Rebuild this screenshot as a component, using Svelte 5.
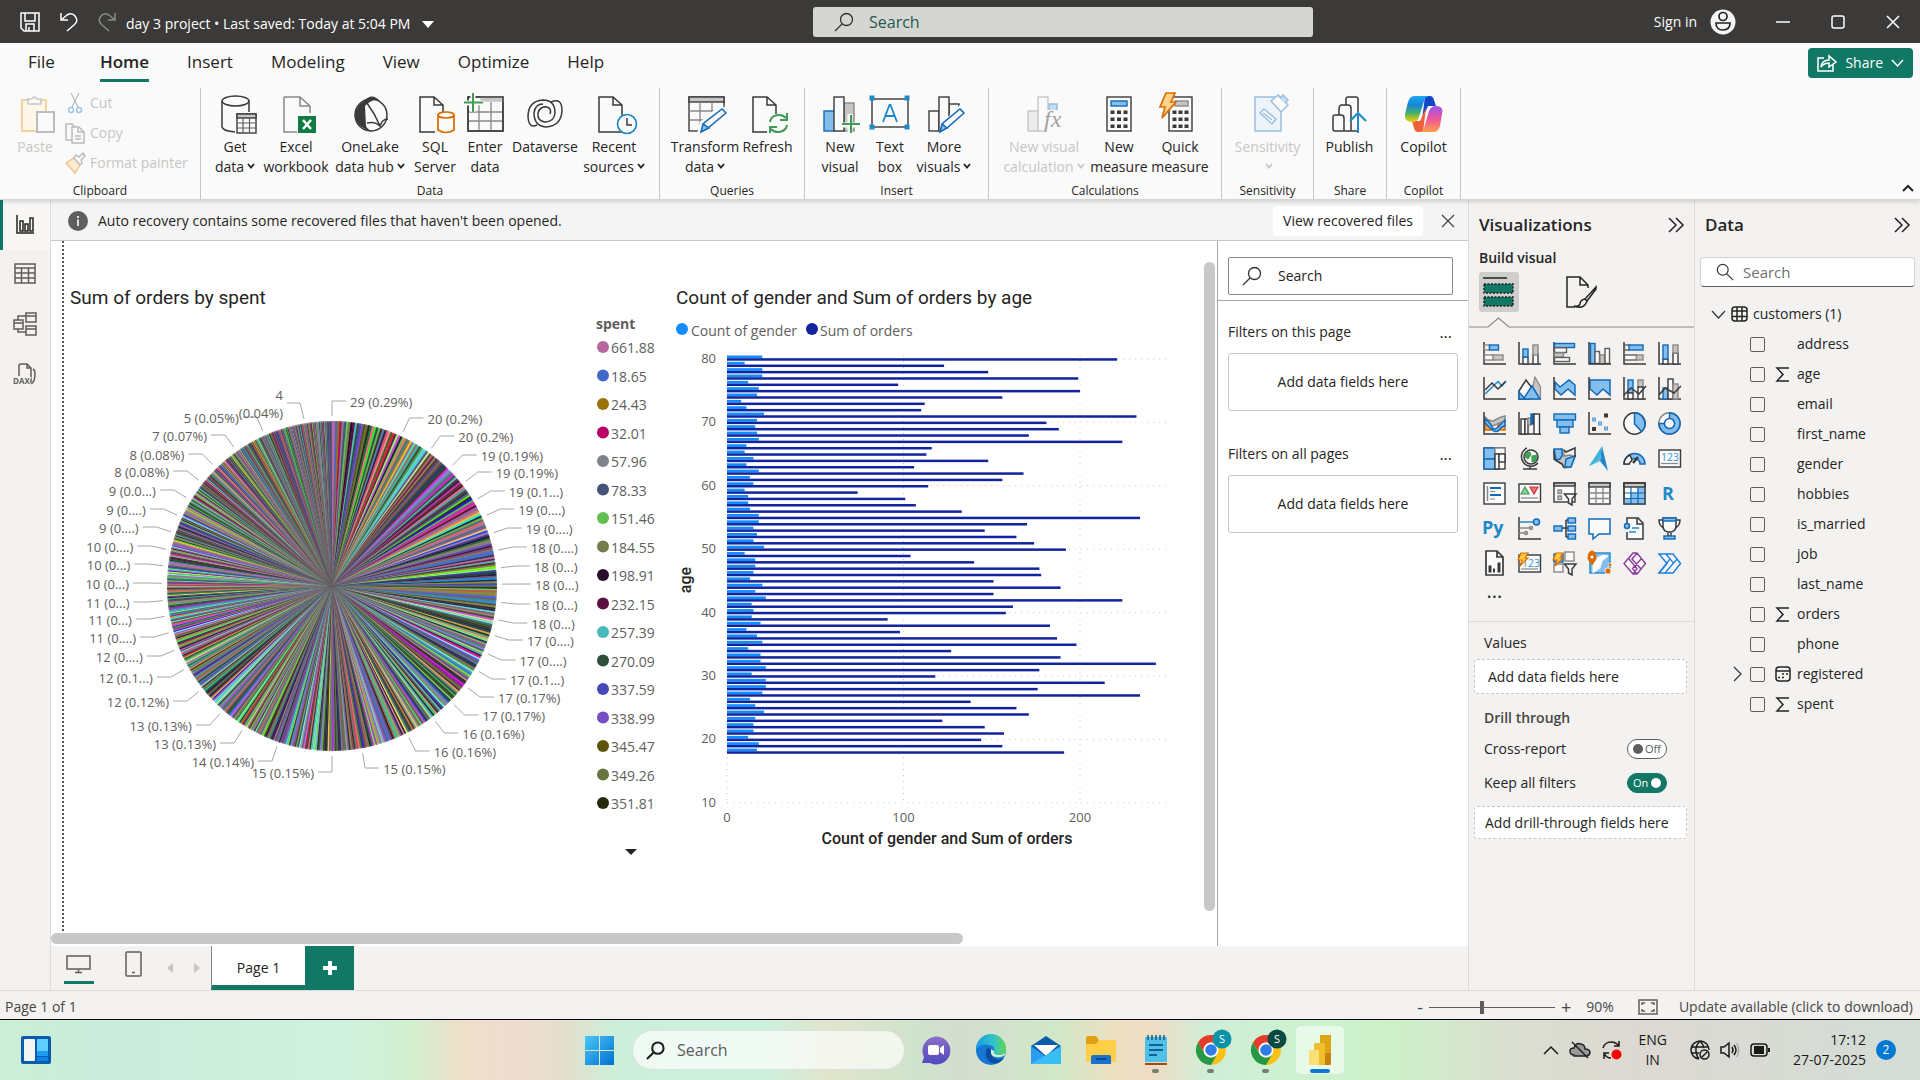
<script>
  const D = '#3b3a39', B = '#1169b8', LB = '#83beec', G = '#c8c6c4', GS = '#8a8886', W = '#fafafa', GR = '#3f9b55';

  const r = (x, y, w, h, fill = W, stroke = D, sw = 1.4) =>
    `<rect x="${x}" y="${y}" width="${w}" height="${h}" fill="${fill}" stroke="${stroke}" stroke-width="${sw}"/>`;
  const p = (d, stroke = D, fill = 'none', sw = 1.5) =>
    `<path d="${d}" fill="${fill}" stroke="${stroke}" stroke-width="${sw}"/>`;
  const c = (x, y, rad, fill = W, stroke = D, sw = 1.5) =>
    `<circle cx="${x}" cy="${y}" r="${rad}" fill="${fill}" stroke="${stroke}" stroke-width="${sw}"/>`;
  const axes = p('M1 0V22H23');
  const bolt = p('M3 1H10L7 6H10L2 14L4 8H0Z', '#d86c00', '#ffc83d', 1.2);
  const funnel = p('M11.5 12H23L19 17V23L15.5 21V17Z', D, W, 1.5);

  // Visual gallery, drawn on a 23 x 23 grid
  const visuals = [
    ['Stacked bar chart', axes + r(1.5, 3, 5, 5, W, GS) + r(6.5, 3, 9, 5, LB, B) + r(1.5, 13, 9, 5, W, GS) + r(10, 13, 10, 5, G, GS)],
    ['Stacked column chart', axes + r(5, 15, 5, 7) + r(5, 7, 5, 8, LB, B) + r(15, 12, 5, 10) + r(15, 3, 5, 10, G, GS)],
    ['Clustered bar chart', axes + r(1.5, 1.5, 20, 4, LB, B) + r(1.5, 5.8, 12, 4.7, W, '#605e5c') + r(1.5, 11, 9, 4, G, GS) + r(1.5, 15.5, 15, 4, W, '#605e5c')],
    ['Clustered column chart', r(2.5, 1.5, 4.5, 20, LB, B) + r(7, 9.5, 4.5, 12, W, '#605e5c') + r(12, 13, 4.5, 9, G, GS) + r(17, 6.5, 4.5, 15, W, '#605e5c') + axes],
    ['100% stacked bar chart', axes + r(1.5, 3, 5, 5, W, '#605e5c') + r(6, 3, 14, 5, LB, B) + r(1.5, 13, 12, 5, W, '#605e5c') + r(13.5, 13, 6.5, 5, G, GS)],
    ['100% stacked column chart', axes + r(5, 17, 5, 5) + r(5, 3, 5, 14, LB, B) + r(15, 11, 5, 11) + r(15, 3, 5, 8, G, GS)],
    ['Line chart', axes + p('M2 17L15 4.500L19 9L23 4', '#1e88c9') + p('M2 13L9 6L15 12L22.500 4.500')],
    ['Area chart', p('M17 0L22.500 10V22H12Z', GS, G, 1.2) + p('M1 14L8 3L17 15L12 22H1Z', D, W) + p('M1 15L6 21L14 9L22 22H1Z', B, LB)],
    ['Stacked area chart', p('M2 5L7 10L16 3L22 8V18L15 12L8 18L2 12Z', B, LB) + axes],
    ['100% stacked area chart', p('M2 3H22V18L15 12L9 18L2 12Z', B, LB) + axes],
    ['Line and stacked column chart', axes + r(5, 3, 5, 13, LB, B) + r(5, 16, 5, 6) + r(15, 3, 5, 7, G, GS) + r(15, 10, 5, 12) + p('M1 18L8 11L16 17L23 9')],
    ['Line and clustered column chart', axes + r(5, 11, 5, 11, LB, B) + r(10, 2, 5, 20) + r(15, 7, 5, 15, G, GS) + p('M1 18L7 11L16 16L23 9')],
    ['Ribbon chart', p('M2 5Q7 11 12 8T22 4V10Q17 10 12 13T2 9Z', GS, G) + p('M2 13H8V18H2ZM15 13H22V18H15Z', '#d86c00', '#f7a64a') + p('M2 7Q7 10 9 15T17 13T22 9V14Q19 14 16 18T7 16T2 11Z', B, LB) + axes],
    ['Waterfall chart', axes + r(3, 7, 4, 15) + r(7, 7, 3, 15) + r(10, 6, 3, 7, G, GS) + r(13, 2, 3, 10, B, B) + r(16, 2, 5.5, 20)],
    ['Funnel', r(1, 2, 21.500, 6, LB, B) + r(4, 8, 16, 7, LB, B) + r(7, 15, 9, 6, LB, B)],
    ['Scatter chart', axes + r(4.500, 15.500, 3, 3, D, D, 1) + r(16.500, 2, 3, 3, D, D, 1) + r(4.500, 6, 3, 3, LB, '#5aa2dc', 1) + r(10.500, 10, 3, 3, LB, '#5aa2dc', 1) + r(16.500, 15, 3, 3, LB, '#5aa2dc', 1)],
    ['Pie chart', c(11.500, 11.500, 10.700) + p('M11.500 1A10.700 10.700 0 0 1 18.500 19.500L11.500 12Z', B, LB)],
    ['Donut chart', c(11.500, 11.500, 10.700, W, GS) + p('M11.500 1A10.500 10.500 0 1 1 1 11.500H6.500A5 5 0 1 0 11.500 6.500Z', B, LB) + c(11.500, 11.500, 5, W, B)],
    ['Treemap', r(1, 1, 21, 21) + r(1, 1, 11, 11, LB, B) + r(1, 12, 11, 10, LB, B) + r(12, 1, 10, 6, W, GS) + r(12, 7, 4, 15) + r(16, 7, 6, 8)],
    ['Map', c(13, 10, 7, W) + p('M8 6L12 5L13 8L10 12L7 10ZM14 9L19 8L18 14L14 15Z', GR, '#36a853', 1) + p('M9 1A9.500 9.500 0 1 0 20 16M12 19V22M5 22H19')],
    ['Filled map', p('M1 3H11V9L17 8L22 10L18 20L12 21L9 17L2 13Z', GS, G) + p('M1 2H9V9L7 12L3 13Z', B, LB) + p('M13 12L22 9L18 20H12Z', B, LB) + p('M11 3L13 5L22 1V10M1 3V12L9 17L11 21', D)],
    ['Azure map', `<path d="M14 -1L1 19L12 14Z" fill="#3eb3da"/><path d="M14 -1L12 14L20 24Z" fill="#1d87c9"/><path d="M1 19L14 9L12 14Z" fill="#56bde0"/>`],
    ['Gauge', p('M1 17A10.500 10.500 0 0 1 22 17H17A5.500 5.500 0 0 0 6 17Z', B, LB) + p('M1 17A10.500 10.500 0 0 1 7 8L9 13L6 17Z', D, W) + p('M10 16L15 10', D, 'none', 2.500)],
    ['Card', r(1, 3, 21.500, 17) + `<text x="3" y="14" font-family="Open Sans, sans-serif" font-size="10.500" fill="#3a96d6">123</text>` + p('M3 16.500H20', GS, 'none', 1.200)],
    ['Multi-row card', r(1, 1, 21, 21) + p('M4.500 4V19', GS) + p('M7 6H18M7 13H18', B, 'none', 2) + p('M7 9.500H12M7 17H12', GS, 'none', 1.200)],
    ['KPI', r(1, 2, 21.500, 18) + p('M3 12L7 5L11 12Z', GR, '#8fd19b', 1.200) + p('M12 5H20L16 12Z', '#d13438', '#f1707b', 1.200) + p('M3 16H20', GS, 'none', 1.200)],
    ['Slicer', r(1, 1, 21, 19) + r(1, 1, 21, 3, G) + r(5, 8, 3.500, 3.500, G, GS) + r(5, 14, 3.500, 3.500, G, GS) + funnel],
    ['Table', r(1, 1, 21, 21) + r(1, 1, 21, 4, G) + p('M8 5V22M15 5V22M1 11H22M1 16.500H22', GS, 'none', 1.300)],
    ['Matrix', r(1, 1, 21, 21) + r(8, 11, 14, 11, LB, LB) + r(15, 5, 7, 17, LB, LB) + r(1, 17, 21, 5, LB, LB) + r(1, 1, 21, 4, G) + p('M8 5V22M15 5V22M1 11H22M1 16.500H22', B, 'none', 1.200) + r(1, 1, 21, 21, 'none')],
    ['R script visual', `<text x="4" y="18" font-family="Open Sans, sans-serif" font-weight="700" font-size="18" fill="#1e88c9">R</text>`],
    ['Python visual', `<text x="-1" y="17" font-family="Open Sans, sans-serif" font-weight="700" font-size="18" fill="#1e88c9">Py</text>`],
    ['Key influencers', axes + p('M1 5H16', '#1e88c9') + c(18.500, 5, 3, LB, B) + p('M1 11H12M1 16H7', GS) + c(13, 11, 1.500, G, GS) + c(8, 16, 1.500, G, GS)],
    ['Decomposition tree', p('M9 11H16M13 3V20M13 3H16M13 20H16') + r(1, 9, 8, 5, LB, B) + r(15, 1, 7.500, 5, LB, B) + r(15, 9, 7.500, 5, LB, B) + r(15, 17, 7.500, 5, LB, B)],
    ['Q&A', p('M1 2H22V17H11L5 22V17H1Z', B, W)],
    ['Smart narrative', p('M4 8V1H15L20 6V22H4V15M14 1V7H20', D, W) + c(4, 9, 2.500, LB, B) + p('M9 11H16M6 15H13', '#1e88c9')],
    ['Metrics', p('M5 1H18V9Q18 15 11.500 15T5 9ZM5 3H1Q1 9 6 11M18 3H22Q22 9 17 11M10 15V19H13V15', D, W) + r(5, 1, 13, 3, LB, B) + r(6, 19, 11, 3, LB, B)],
    ['Paginated report', p('M3 -1H14L20 5V23H3ZM14 -1V5H20', D, W, 1.700) + r(6, 14, 2, 6, D, D, 1) + r(10.500, 17, 1, 3, D, D, 1) + r(15, 11, 2, 9, D, D, 1)],
    ['Card (new)', r(1, 3, 21.500, 17) + `<text x="4" y="15" font-family="Open Sans, sans-serif" font-size="10.500" fill="#3a96d6">123</text>` + p('M3 17H20', GS, 'none', 1.200) + bolt],
    ['Slicer (new)', r(1, 12, 9, 8, W, GS) + r(12, 0, 9, 9, W, GS) + r(1, 2, 9, 8, LB, B) + bolt + funnel],
    ['ArcGIS map', r(2, 1, 20, 20, LB, '#1e88c9') + p('M20 4L14 9L12 16L5 21V8L15 3Z', W, W, 1) + p('M4 13L0 7Q0 -1 4 -1T8 7Z', '#d86c00', '#d86c00', 1) + c(4, 5, 1.500, W, W, 0) + c(20, 19, 3.200, '#d86c00', W, 1) + c(22, 13, 1.800, '#d86c00', W, .6)],
    ['Power Apps', p('M1 11.500L10 1H14L22.500 11.500L14 22H10ZM10 1L5.500 6.500L14 16.500L10 22M14 1L9 7L18 17M14 22L9.500 16.500L18.500 6.500', '#8c3a9b', W, 1.400)],
    ['Power Automate', p('M1 2H15L22.500 11.500L15 21H1L9 11.500Z', '#1e80e0', W, 1.500) + p('M8 2L15.500 11L7 21M12 7L1 21M19 7L7 21', '#1e80e0', 'none', 1.300)]
  ];

  const page = (s = D) => p('M5 3H19L28 11V38H5ZM19 3V11H28', s, W, 1.5);
  const pencil = p('M14 36L16 29L34 15L38 19L20 34Z', B, W) + p('M14 38L16 30L21 34Z', B, LB);

  // Ribbon icons, drawn on a 40 x 40 grid centred over each label
  const I = {
    paste: r(7, 6, 24, 31, '#fdf6e9', '#f3d3a0', 2) + p('M13 10V5H17Q19 1 22 5H26V10Z', '#c8c8c8', W) + r(22, 18, 17, 20, W, '#bdbdbd', 2),
    get: p('M7 7V33Q8 37 20 38M34 7V18', D) + `<ellipse cx="20.500" cy="7" rx="13.500" ry="5" fill="${W}" stroke="${D}" stroke-width="1.500"/>` + r(22, 20, 19, 19) + r(22, 20, 19, 4, G) + p('M28 24V39M34.500 24V39M22 29H41M22 34H41', '#605e5c', 'none', 1.2),
    excel: p('M8 3H24L34 12V19M24 3V12H34M8 3V38H21', '#8a8886', W) + `<rect x="22" y="22" width="18" height="17" fill="#107c41"/><path d="M27 26L35 35M35 26L27 35" stroke="#fff" stroke-width="2.500"/>`,
    onelake: c(21, 21, 16, W) + `<path d="M14 7Q22 -2 30 7Q22 4 15 12L16 32Q17 35 23 38Q5 33 5 21Q6 12 14 7Z" fill="${D}"/>` + p('M17 9Q25 20 30 32Q32 25 38 25M30 32Q25 27 17 29'),
    sql: page() + `<rect x="20" y="18" width="21" height="22" fill="${W}"/>` + p('M23 21V36Q31 41 39 36V21', '#d86c00', W, 1.7) + `<ellipse cx="31" cy="21" rx="8" ry="3" fill="${W}" stroke="#d86c00" stroke-width="1.700"/>`,
    enter: r(3, 3, 35, 34) + r(16, 3, 22, 4, G, G) + p('M14 8V37M26 8V37M3 18H38M3 27H38', '#8a8886', 'none', 1.3) + r(3, 3, 35, 34, 'none') + p('M8 0V18M0 9H18', W, 'none', 5) + p('M8 -1V18M-1 8.500H18', GR, 'none', 2),
    dataverse: p('M12 31Q4 35 3 23Q3 7 18 6Q30 6 30 19Q29 28 20 28Q12 27 13 19Q15 12 22 13Q27 15 25 20M26 8Q37 3 37 17Q36 32 21 33Q9 32 9 19Q10 10 18 10'),
    recent: page() + c(33, 30, 9.500, W, '#1e88c9', 1.7) + p('M33 24V31H38'),
    transform: r(4, 3, 35, 34) + r(4, 3, 35, 5, G) + p('M15 8V37M27 8V37M4 17H39M4 26H39', '#8a8886', 'none', 1.3) + `<path d="M12 40L15 28L35 11L43 15V40Z" fill="${W}"/>` + p('M17 36L19 29L37 15L41 19L23 34Z', B, W) + p('M16 38L18 30L24 34Z', B, LB),
    refresh: page() + `<rect x="19" y="20" width="23" height="20" fill="${W}"/>` + p('M22 28A9 8 0 0 1 38 24M39 31A9 8 0 0 1 23 35M39 19V26H32M22 39V33H29', GR, 'none', 2),
    newvisual: r(4, 17, 11, 20, LB, B) + r(24, 9, 10, 28, G, GS) + r(14, 3, 10, 34) + p('M30 20V40M20 31H40', W, 'none', 5) + p('M31 21V39M22 30H40', GR, 'none', 2),
    textbox: r(2, 5, 36, 28) + [[0, 2], [35, 2], [0, 31], [35, 31]].map(([x, y]) => r(x, y, 4, 4, '#1e88c9', '#1e88c9', 1)).join('') + p('M13 28L19.500 11H20.500L27 28M15.500 22H24.500', '#1e88c9', 'none', 1.8),
    more: `<g transform="translate(4 0)">` + r(1, 17, 10, 20) + r(21, 10, 10, 27) + r(11, 3, 10, 34) + `<path d="M11 40L13 30L32 11L40 15V40Z" fill="${W}"/>` + p('M13 36L15 29L32 15L36 19L19 34Z', B, W) + p('M12 38L14 30L19 34Z', B, LB) + `</g>`,
    newcalc: `<g opacity=".45">` + r(4, 17, 11, 20, '#dedddc', GS) + r(25, 10, 8, 12, LB, B) + r(14, 3, 10, 34, W, GS) + `</g><rect x="20" y="16" width="20" height="24" fill="${W}"/><text x="20" y="33" font-family="Liberation Serif, serif" font-style="italic" font-size="24" fill="#a3a2a0">fx</text>`,
    newmeasure: r(8, 3, 24, 34) + r(12, 7, 16, 5, LB, B) + [0, 1, 2].map((i) => [0, 1, 2].map((j) => r(12 + i * 6.5, 17 + j * 7, 3, 2.500, D, D, 1)).join('')).join(''),
    quick: r(9, 3, 23, 34) + r(15, 7, 13, 5, G, GS) + [0, 1, 2].map((i) => [0, 1, 2].map((j) => r(13 + i * 6, 17 + j * 7, 3, 2.500, D, D, 1)).join('')).join('') + p('M6 -1H15L11 8H16L2 24L5 13H0Z', '#d86c00', '#fdd28a', 1.7),
    sensitivity: `<g opacity=".4">` + p('M7 3H33V37H7Z', B, '#d9ecfa') + p('M12 19L16 15L28 25L24 30Z', B, W) + p('M15 19L24 26', B) + p('M23 7L30 1L40 11L33 18Z', B, W) + p('M30 1L33 4L35 1L40 6L37 9', B, LB) + `</g>`,
    publish: p('M3 23Q3 21 5 21H11Q14 21 14 24V37H5Q3 37 3 35ZM9 21V15Q9 11 12 11H18Q21 11 21 14V37H14M16 11V5Q16 3 18 3H26Q28 3 28 5V18M21 22V37H28') + p('M28 39V19M20 27L28 19L36 27', '#1e88c9', 'none', 2)
  };

  const groups = [
    { name: 'Data', pad: 11, end: 15, items: [
      ['get', 46, 'Get', 'data', 1], ['excel', 76, 'Excel', 'workbook'], ['onelake', 72, 'OneLake', 'data hub', 1], ['sql', 58, 'SQL', 'Server'],
      ['enter', 42, 'Enter', 'data'], ['dataverse', 78, 'Dataverse', ''], ['recent', 60, 'Recent', 'sources', 1]] },
    { name: 'Queries', pad: 12, end: 7, items: [['transform', 66, 'Transform', 'data', 1], ['refresh', 59, 'Refresh', '']] },
    { name: 'Insert', pad: 10, end: 15, items: [['newvisual', 50, 'New', 'visual'], ['textbox', 50, 'Text', 'box'], ['more', 58, 'More', 'visuals', 1]] },
    { name: 'Calculations', pad: 11, end: 11, items: [['newcalc', 88, 'New visual', 'calculation', 1, 1], ['newmeasure', 62, 'New', 'measure'], ['quick', 60, 'Quick', 'measure']] },
    { name: 'Sensitivity', pad: 10, end: 10, items: [['sensitivity', 71, 'Sensitivity', '', 1, 1]] },
    { name: 'Share', pad: 5, end: 6, items: [['publish', 61, 'Publish', '']] },
    { name: 'Copilot', pad: 6, end: 6, items: [['copilot', 61, 'Copilot', '']] }
  ];

  const tabs = ['File', 'Home', 'Insert', 'Modeling', 'View', 'Optimize', 'Help'];

  // Pie chart
  const CX = 268, CY = 345, R = 165, RL = 185;
  const known = ['#b5689f', '#4068c8', '#9a7008', '#b80065', '#7d8388', '#45527a', '#62bf4f', '#747d4e', '#2a0c2b', '#5c0d42', '#49b9bc', '#2e4f3b', '#4648b8', '#744ec2', '#5c540c', '#66753f', '#262b0c'];
  const legend = ['661.88', '18.65', '24.43', '32.01', '57.96', '78.33', '151.46', '184.55', '198.91', '232.15', '257.39', '270.09', '337.59', '338.99', '345.47', '349.26', '351.81'];
  let seed = 41;
  const rand = () => (seed = (seed * 16807) % 2147483647) / 2147483647;
  const tint = () => {
    const tone = rand();
    const h = Math.floor(rand() * 360);
    if (tone < 0.3) return `hsl(${h} ${20 + Math.floor(rand() * 40)}% ${16 + Math.floor(rand() * 14)}%)`;
    if (tone < 0.7) return `hsl(${h} ${15 + Math.floor(rand() * 35)}% ${36 + Math.floor(rand() * 22)}%)`;
    return `hsl(${h} ${60 + Math.floor(rand() * 40)}% ${45 + Math.floor(rand() * 30)}%)`;
  };
  const values = Array.from({ length: 800 }, (_, i) => (i === 0 ? 29 : 20 - 16 * Math.pow(i / 800, 0.9)));
  const total = values.reduce((a, b) => a + b, 0);
  let acc = 0;
  const pt = (a, rad) => `${(CX + rad * Math.sin(a)).toFixed(2)} ${(CY - rad * Math.cos(a)).toFixed(2)}`;
  const slices = values.map((v, i) => {
    const a0 = (acc / total) * Math.PI * 2;
    acc += v;
    const a1 = (acc / total) * Math.PI * 2;
    return { d: `M${CX} ${CY}L${pt(a0, R)}A${R} ${R} 0 0 1 ${pt(a1, R)}Z`, fill: i < known.length ? known[i] : tint() };
  });
  const right = [['29 (0.29%)', 160], ['20 (0.2%)', 177], ['20 (0.2%)', 195], ['19 (0.19%)', 214], ['19 (0.19%)', 231], ['19 (0.1...)', 250], ['19 (0....)', 268], ['19 (0....)', 287], ['18 (0....)', 306], ['18 (0...)', 325], ['18 (0...)', 343], ['18 (0...)', 363], ['18 (0...)', 382], ['17 (0....)', 399], ['17 (0....)', 419], ['17 (0.1...)', 438], ['17 (0.17%)', 456], ['17 (0.17%)', 474], ['16 (0.16%)', 492], ['16 (0.16%)', 510], ['15 (0.15%)', 527]];
  const left = [['15 (0.15%)', 531], ['14 (0.14%)', 520], ['13 (0.13%)', 502], ['13 (0.13%)', 484], ['12 (0.12%)', 460], ['12 (0.1...)', 436], ['12 (0....)', 415], ['11 (0....)', 396], ['11 (0...)', 378], ['11 (0...)', 361], ['10 (0...)', 342], ['10 (0...)', 323], ['10 (0....)', 305], ['9 (0....)', 286], ['9 (0....)', 268], ['9 (0.0...)', 249], ['8 (0.08%)', 230], ['8 (0.08%)', 213], ['7 (0.07%)', 194], ['5 (0.05%)', 176]];
  const label = ([text, y], side) => {
    const dy = Math.max(-1, Math.min(1, (y - CY) / RL));
    const dx = side * Math.sqrt(1 - dy * dy);
    const ex = CX + dx * RL;
    return { text, y, anchor: side > 0 ? 'start' : 'end', tx: ex + side * 18, line: `M${CX + dx * 170} ${CY + dy * 170}L${ex} ${y}h${side * 14}` };
  };
  const labels = [...right.map((l) => label(l, 1)), ...left.map((l) => label(l, -1))];

  // Bar chart: ages 80 down to 18
  const orders = [221, 123, 148, 199, 97, 200, 156, 112, 110, 232, 181, 188, 171, 224, 116, 113, 148, 106, 168, 156, 114, 74, 101, 107, 133, 234, 170, 146, 164, 174, 192, 104, 140, 177, 178, 151, 189, 151, 224, 162, 158, 91, 183, 98, 187, 198, 127, 189, 243, 177, 118, 214, 176, 234, 138, 164, 171, 122, 146, 157, 144, 156, 191];
  const genders = [20, 10, 20, 20, 12, 18, 17, 8, 11, 21, 17, 16, 17, 18, 11, 10, 15, 11, 18, 13, 15, 10, 12, 12, 13, 18, 18, 15, 17, 15, 21, 10, 16, 16, 15, 13, 20, 16, 22, 14, 15, 14, 19, 11, 17, 20, 12, 19, 19, 22, 14, 22, 22, 20, 13, 16, 21, 16, 15, 15, 12, 18, 17];
  const X0 = 63, UX = 1.765, Y80 = 118, UY = 6.34;
  const ageY = (a) => Y80 + (80 - a) * UY;

  const fields = [['address'], ['age', 's'], ['email'], ['first_name'], ['gender'], ['hobbies'], ['is_married'], ['job'], ['last_name'], ['orders', 's'], ['phone'], ['registered', 'd'], ['spent', 's']];

  let activeTab = $state('Home');
</script>

{#snippet chev()}<svg class="chev" viewBox="0 0 8 6" aria-hidden="true"><path d="M1 1L4 4.500L7 1" /></svg>{/snippet}
{#snippet lens(cls)}<svg class="lens {cls}" viewBox="0 0 20 20" aria-hidden="true"><circle cx="12.500" cy="7.500" r="6" /><path d="M8 12L1 19" /></svg>{/snippet}
{#snippet dbl()}<svg class="dbl" viewBox="0 0 16 16" aria-hidden="true"><path d="M1 1L8 8L1 15M8 1L15 8L8 15" /></svg>{/snippet}
{#snippet chrome(initial, cls)}
  <svg width="42" height="42" viewBox="-6 -6 42 42" aria-hidden="true">
    <circle cx="15" cy="15" r="15" fill="#fbc116" />
    <path d="M2 7.500A15 15 0 0 1 28 7.500H15A7.500 7.500 0 0 0 8.500 18.700Z" fill="#e33b2e" />
    <path d="M2 7.500A15 15 0 0 0 15 30L21.500 18.700A7.500 7.500 0 0 1 8.500 18.700Z" fill="#249a49" />
    <circle cx="15" cy="15" r="7.500" fill="#fff" /><circle cx="15" cy="15" r="5.800" fill="#2f7de9" />
    <circle cx="26" cy="4" r="9.500" class={cls} />
    <text x="26" y="8" text-anchor="middle" class="initial">{initial}</text>
  </svg>
{/snippet}

<div class="app">
  <header class="titlebar">
    <div class="tleft">
      <button aria-label="Save"><svg width="20" height="20" viewBox="0 0 20 20"><path class="ln" d="M1 1H19V19H4L1 16ZM5 1V9H15V1M6 19V12H14V19M9 15V19" /></svg></button>
      <button aria-label="Undo"><svg width="18" height="20" viewBox="0 0 18 20"><path class="ln" d="M1 1V8H8M1 8L7 3Q12 0 15 4Q19 9 14 13L7 19" /></svg></button>
      <button aria-label="Redo" class="dim"><svg width="18" height="20" viewBox="0 0 18 20"><path class="ln" d="M17 1V8H10M17 8L11 3Q6 0 3 4Q-1 9 4 13L11 19" /></svg></button>
      <button class="doc">day 3 project • Last saved: Today at 5:04 PM<svg width="12" height="7" viewBox="0 0 12 7"><path d="M0 0H12L6 7Z" fill="#fff" /></svg></button>
    </div>
    <label class="tsearch">{@render lens('big')}<input type="search" placeholder="Search" aria-label="Search" /></label>
    <div class="tright">
      <button class="signin">Sign in
        <svg width="26" height="26" viewBox="0 0 26 26"><circle cx="13" cy="13" r="12.500" fill="#f5f5f5" /><circle cx="13" cy="7.500" r="4" fill="none" stroke="#222" stroke-width="1.700" /><path d="M6 14H20Q20 21 13 21T6 14Z" fill="none" stroke="#222" stroke-width="1.700" /></svg>
      </button>
      <button class="win" aria-label="Minimize"><svg width="14" height="14" viewBox="0 0 14 14"><path class="ln" d="M0 7H14" /></svg></button>
      <button class="win" aria-label="Maximize"><svg width="14" height="14" viewBox="0 0 14 14"><rect class="ln" x="1" y="1" width="12" height="12" rx="2" /></svg></button>
      <button class="win" aria-label="Close"><svg width="14" height="14" viewBox="0 0 14 14"><path class="ln" d="M1 1L13 13M13 1L1 13" /></svg></button>
    </div>
  </header>

  <nav class="tabs">
    {#each tabs as t}
      <button class:file={t === 'File'} class:on={activeTab === t} onclick={() => (activeTab = t)}><span>{t}</span></button>
    {/each}
    <button class="share">
      <svg width="20" height="18" viewBox="0 0 20 18"><path class="ln" d="M7 4H1V17H16V11M4 13Q5 6 12 6V2L19 8L12 13V9Q7 9 4 13Z" /></svg>
      Share
      <svg width="13" height="8" viewBox="0 0 13 8"><path class="ln" d="M1 1L6.500 7L12 1" /></svg>
    </button>
  </nav>

  <section class="ribbon" aria-label="Ribbon">
    <div class="group clipboard">
      <div class="items">
        <button class="rb off" disabled><svg width="40" height="40" viewBox="0 0 40 40">{@html I.paste}</svg><span>Paste</span></button>
        <div class="stack">
          <button disabled><svg width="20" height="22" viewBox="0 0 20 22"><path d="M6 1L13 15M14 1L7 15" stroke="#aaa" /><g fill="none" stroke="#9cc8e6" stroke-width="1.500"><circle cx="6" cy="18" r="2.500" /><circle cx="14" cy="18" r="2.500" /></g></svg>Cut</button>
          <button disabled><svg width="20" height="22" viewBox="0 0 20 22"><g fill="#fafafa" stroke="#bbb" stroke-width="1.500"><path d="M1 2H7L11 6V18H1Z" /><path d="M7 5H14L19 10V21H7ZM13 5V10H19M10 14H16M10 17H16" /></g></svg>Copy</button>
          <button disabled><svg width="20" height="22" viewBox="0 0 20 22"><path d="M1 11L9 6L15 13L10 21Z" fill="#fdebd0" stroke="#efc08a" stroke-width="1.400" /><path d="M9 6L11 3L14 5L18 1L20 4L16 8L17 11L15 13Z" fill="#fafafa" stroke="#bbb" stroke-width="1.400" /></svg>Format painter</button>
        </div>
      </div>
      <h3>Clipboard</h3>
    </div>
    {#each groups as g}
      <div class="group">
        <div class="items" style="padding-left:{g.pad}px;padding-right:{g.end}px">
          {#each g.items as [icon, w, l1, l2, drop, off]}
            <button class="rb" class:off style="width:{w}px" disabled={!!off}>
              {#if icon === 'copilot'}
                <svg width="40" height="40" viewBox="0 0 40 40">
                  <defs>
                    <linearGradient id="cpA" x1="0" y1="0" x2="0" y2="1"><stop offset="0" stop-color="#1fa5f5" /><stop offset=".35" stop-color="#1486d8" /><stop offset=".65" stop-color="#45b06a" /><stop offset="1" stop-color="#f5d000" /></linearGradient>
                    <linearGradient id="cpB" x1="0" y1="0" x2="0" y2="1"><stop offset="0" stop-color="#9a55f0" /><stop offset=".5" stop-color="#ee5598" /><stop offset="1" stop-color="#ffa04a" /></linearGradient>
                  </defs>
                  <path d="M21 2H26Q29 2 30 6L32 12H24L18 26Z" fill="#1447c8" />
                  <path d="M19 38H14Q11 38 10 34L8 27H16L22 14Z" fill="#f0603a" />
                  <path d="M10 2H25Q21 3 20 7L15 23Q14 28 8 28Q0 28 1 20L4 8Q6 2 10 2Z" fill="url(#cpA)" />
                  <path d="M30 38H14Q19 38 20 34L25 17Q27 12 32 12Q40 12 38 20L36 32Q34 38 30 38Z" fill="url(#cpB)" />
                </svg>
              {:else}
                <svg width="40" height="40" viewBox="0 0 40 40">{@html I[icon]}</svg>
              {/if}
              <span>{l1}</span>
              {#if l2 || drop}<span>{l2}{#if drop}{@render chev()}{/if}</span>{/if}
            </button>
          {/each}
        </div>
        <h3>{g.name}</h3>
      </div>
    {/each}
    <button class="collapse" aria-label="Collapse ribbon"><svg width="12" height="8" viewBox="0 0 12 8"><path d="M1 7L6 2L11 7" fill="none" stroke="#222" stroke-width="2" /></svg></button>
  </section>

  <div class="body">
    <nav class="rail">
      <button class="on" aria-label="Report view"><svg width="24" height="24" viewBox="0 0 24 24"><path d="M4 3V21H21" class="k2" /><path d="M7 9H10V19H7ZM12 12H15V19H12ZM17 6H20V19H17Z" class="k2" /></svg></button>
      <button aria-label="Table view"><svg width="24" height="24" viewBox="0 0 24 24"><path d="M2 2H22V21H2ZM2 6H22M2 11H22M2 16H22M8.500 6V21M15.500 6V21" class="g" /></svg></button>
      <button aria-label="Model view"><svg width="24" height="24" viewBox="0 0 24 24"><path d="M1 8H10V17H1ZM1 11H10M13 1H23V10H13ZM13 4H23M13 14H23V23H13ZM13 17H23M5 8V4H13M5 17V20H13" class="g" /></svg></button>
      <button aria-label="DAX query view"><svg width="24" height="24" viewBox="0 0 24 24"><path d="M6 14V4Q6 2 8 2H14L18 6V19Q18 21 15 21M14 2V6H18M20 7Q22 8 22 12Q22 20 18 22" class="g" /><text x="0" y="22" class="dax">DAX</text></svg></button>
    </nav>

    <main class="center">
      <div class="info">
        <svg width="20" height="20" viewBox="0 0 20 20"><circle cx="10" cy="10" r="10" fill="#605e5c" /><path d="M10 8.500V15M10 5V7" stroke="#fff" stroke-width="1.600" /></svg>
        <p>Auto recovery contains some recovered files that haven't been opened.</p>
        <button class="rec">View recovered files</button>
        <button class="x" aria-label="Dismiss"><svg width="14" height="14" viewBox="0 0 14 14"><path d="M1 1L13 13M13 1L1 13" stroke="#444" stroke-width="1.200" /></svg></button>
      </div>
      <div class="work">
        <div class="canvas">
          <div class="scroll">
            <div class="sheet">
              <svg class="pie" width="600" height="690" viewBox="0 0 600 690" role="img" aria-label="Sum of orders by spent">
                <text x="6" y="63" class="ct">Sum of orders by spent</text>
                <circle cx={CX} cy={CY} r={R - 1} fill="#77707a" />
                {#each slices as s}<path d={s.d} fill={s.fill} />{/each}
                {#each labels as l}
                  <path d={l.line} class="lead" />
                  <text x={l.tx} y={l.y + 6} text-anchor={l.anchor} class="lb">{l.text}</text>
                {/each}
                <path d="M240 178L236 162h-13" class="lead" />
                <text x="219" y="159" text-anchor="end" class="lb">4</text>
                <text x="219" y="177" text-anchor="end" class="lb">(0.04%)</text>
                <text x="532" y="88" class="lg b">spent</text>
                {#each legend as l, i}
                  <circle cx="539" cy={106 + i * 28.5} r="6" fill={known[i]} />
                  <text x="547" y={112 + i * 28.5} class="lg">{l}</text>
                {/each}
                <path d="M561 608H573L567 614Z" fill="#252423" />
              </svg>
              <svg class="bars" width="536" height="690" viewBox="0 0 536 690" role="img" aria-label="Count of gender and Sum of orders by age">
                <text x="12" y="63" class="ct">Count of gender and Sum of orders by age</text>
                <circle cx="18" cy="88" r="6" fill="#118dff" /><text x="27" y="95" class="lg">Count of gender</text>
                <circle cx="148" cy="88" r="6" fill="#12239e" /><text x="156" y="95" class="lg">Sum of orders</text>
                {#each [80, 70, 60, 50, 40, 30, 20, 10] as a}
                  <path d="M{X0} {ageY(a)}H503" class="grid" />
                  <text x="52" y={ageY(a) + 4} text-anchor="end" class="ax">{a}</text>
                {/each}
                {#each [0, 100, 200] as v}
                  <path d="M{X0 + v * UX} 114V562" class="grid" />
                  <text x={X0 + v * UX} y="581" text-anchor="middle" class="ax">{v}</text>
                {/each}
                {#each orders as o, i}
                  <rect x={X0} y={ageY(80 - i) - 3.5} width={genders[i] * UX} height="2.700" fill="#118dff" />
                  <rect x={X0} y={ageY(80 - i) - 0.8} width={o * UX} height="2.500" fill="#12239e" />
                {/each}
                <text x="283" y="603" text-anchor="middle" class="at">Count of gender and Sum of orders</text>
                <text transform="translate(27 339) rotate(-90)" text-anchor="middle" class="at">age</text>
              </svg>
            </div>
            <div class="vbar"></div>
          </div>
          <div class="hbar"></div>
        </div>
        <aside class="filters">
          <div class="fs"><label>{@render lens('big')}<input type="search" placeholder="Search" aria-label="Search filters" /></label></div>
          {#each ['Filters on this page', 'Filters on all pages'] as f}
            <div class="fh"><h3>{f}</h3><button aria-label="More options">...</button></div>
            <div class="drop">Add data fields here</div>
          {/each}
        </aside>
      </div>
      <footer class="pages">
        <button class="view on" aria-label="Desktop layout"><svg width="26" height="22" viewBox="0 0 26 22"><path d="M1 3H24V16H1ZM12.500 16V19M9 19.500H16" class="g" /></svg></button>
        <button class="view" aria-label="Mobile layout"><svg width="18" height="27" viewBox="0 0 18 27"><rect x="1" y="2" width="15" height="24" rx="1" class="g" /><path d="M7 22.500H10" class="g" /></svg></button>
        <button class="arr" aria-label="Previous page"><svg width="6" height="10" viewBox="0 0 6 10"><path d="M6 0V10L0 5Z" fill="#c8c6c4" /></svg></button>
        <button class="arr" aria-label="Next page"><svg width="6" height="10" viewBox="0 0 6 10"><path d="M0 0V10L6 5Z" fill="#c8c6c4" /></svg></button>
        <button class="pg">Page 1</button>
        <button class="add" aria-label="New page"><svg width="14" height="14" viewBox="0 0 14 14"><path d="M7 0V14M0 7H14" stroke="#fff" stroke-width="4" /></svg></button>
      </footer>
    </main>

    <aside class="viz">
      <div class="ph"><h2>Visualizations</h2><button aria-label="Collapse visualizations">{@render dbl()}</button></div>
      <h3 class="bv">Build visual</h3>
      <div class="modes">
        <button class="on" aria-label="Build visual"><svg width="32" height="32" viewBox="0 0 32 32"><path d="M0 2H24" stroke="#222" stroke-width="1.500" /><rect x="1" y="8" width="29" height="9" fill="#117865" stroke="#222" stroke-width="1.500" stroke-dasharray="2 1.500" /><rect x="1" y="21" width="29" height="9" fill="#117865" stroke="#222" stroke-width="1.500" stroke-dasharray="2 1.500" /></svg></button>
        <button aria-label="Format page"><svg width="32" height="32" viewBox="0 0 32 32"><path d="M10 31H2V1H15L23 9V12M15 1V9H23" class="k2" /><path d="M31 11L20 23L22 25L31 13ZM20 23Q15 24 15 28Q14 31 9 30Q19 34 22 25" class="k2" /></svg></button>
      </div>
      <svg class="notch" width="225" height="11" viewBox="0 0 225 11"><path d="M0 10H19L29.500 1L40 10H225" fill="none" stroke="#8a8886" stroke-width="1.200" /></svg>
      <div class="gallery">
        {#each visuals as [name, art]}
          <button aria-label={name}><svg width="23" height="23" viewBox="0 0 23 23">{@html art}</svg></button>
        {/each}
        <button aria-label="Get more visuals" class="dots">...</button>
      </div>
      <div class="wells">
        <h3>Values</h3>
        <div class="well v">Add data fields here</div>
        <h3 class="dt">Drill through</h3>
        <label class="row">Cross-report<input type="checkbox" /><span class="tg"><i></i>Off</span></label>
        <label class="row">Keep all filters<input type="checkbox" checked /><span class="tg on">On<i></i></span></label>
        <div class="well d">Add drill-through fields here</div>
      </div>
    </aside>

    <aside class="data">
      <div class="ph"><h2>Data</h2><button aria-label="Collapse data">{@render dbl()}</button></div>
      <label class="ds">{@render lens('flip')}<input type="search" placeholder="Search" aria-label="Search data" /></label>
      <button class="tbl">
        <svg width="15" height="9" viewBox="0 0 15 9"><path d="M1 1L7.500 8L14 1" class="k1" /></svg>
        <svg width="17" height="16" viewBox="0 0 17 16"><path d="M4 1H13Q16 1 16 4V12Q16 15 13 15H4Q1 15 1 12V4Q1 1 4 1ZM1 5H16M1 10.500H16M6 1V15M11 1V15" class="k2" /></svg>
        customers (1)
      </button>
      <ul>
        {#each fields as [name, kind]}
          <li>
            <span class="ex">{#if kind === 'd'}<svg width="9" height="16" viewBox="0 0 9 16"><path d="M1 1L8 8L1 15" class="k1" /></svg>{/if}</span>
            <label>
              <input type="checkbox" />
              <span class="ic">
                {#if kind === 's'}<svg width="15" height="17" viewBox="0 0 15 17"><path d="M14 2H2L8 8.500L2 15H14" class="k2" /></svg>
                {:else if kind === 'd'}<svg width="16" height="16" viewBox="0 0 16 16"><path d="M4 1H12Q15 1 15 4V12Q15 15 12 15H4Q1 15 1 12V4Q1 1 4 1ZM1 5H15M7 8H9M11 8H13M3 11.500H5M7 11.500H9" class="k2" /></svg>{/if}
              </span>
              {name}
            </label>
          </li>
        {/each}
      </ul>
    </aside>
  </div>

  <footer class="status">
    <span>Page 1 of 1</span>
    <div class="zoom">
      <button aria-label="Zoom out">-</button>
      <input type="range" min="10" max="200" value="90" aria-label="Zoom" />
      <button aria-label="Zoom in">+</button>
      <span class="pct">90%</span>
      <button aria-label="Fit to page" class="fit"><svg width="20" height="16" viewBox="0 0 20 16"><path d="M1 1H19V15H1ZM4 6V4H7M13 4H16V6M16 10V12H13M7 12H4V10" class="g" /></svg></button>
      <a href="#update">Update available (click to download)</a>
    </div>
  </footer>

  <div class="taskbar">
    <button class="widgets" aria-label="Widgets"><svg width="30" height="28" viewBox="0 0 30 28"><rect width="30" height="28" rx="2" fill="#0a5cad" /><rect x="3" y="3" width="11" height="22" rx="1" fill="#f4f4f4" /><rect x="16" y="3" width="11" height="12" fill="#60cdff" /><rect x="16" y="15" width="11" height="5" fill="#1d9bf0" /><rect x="16" y="21" width="11" height="4" fill="#0a84e8" /></svg></button>
    <div class="apps">
      <button aria-label="Start"><svg width="29" height="29" viewBox="0 0 29 29"><defs><linearGradient id="win" x1="0" y1="0" x2="1" y2="1"><stop offset="0" stop-color="#4cc8f8" /><stop offset="1" stop-color="#006fd0" /></linearGradient></defs><path d="M0 0H14V14H0ZM15 0H29V14H15ZM0 15H14V29H0ZM15 15H29V29H15Z" fill="url(#win)" /></svg></button>
      <label class="wsearch">{@render lens('thick')}<input type="search" placeholder="Search" aria-label="Windows search" /></label>
      <button aria-label="Chat"><svg width="30" height="30" viewBox="0 0 30 30"><defs><linearGradient id="chat" x1="0" y1="0" x2="0" y2="1"><stop offset="0" stop-color="#8a6fc4" /><stop offset="1" stop-color="#5048c0" /></linearGradient></defs><path d="M1 28L3 22A14 14 0 1 1 9 28Z" fill="url(#chat)" /><rect x="7" y="10" width="11" height="10" rx="2" fill="#fff" /><path d="M19 13L23 10V20L19 17Z" fill="#fff" /></svg></button>
      <button aria-label="Edge"><svg width="30" height="30" viewBox="0 0 30 30"><defs><linearGradient id="edge" x1="0" y1="0" x2="1" y2="0"><stop offset="0" stop-color="#1a9ae0" /><stop offset=".6" stop-color="#33c4c8" /><stop offset="1" stop-color="#62d84a" /></linearGradient></defs><circle cx="15" cy="15" r="15" fill="#1478d4" /><path d="M0 14A15 15 0 0 1 30 14Q30 20 23 20Q17 20 18 17Q20 12 14 10Q5 8 0 14Z" fill="url(#edge)" /><path d="M11 13Q7 24 16 28Q23 30 28 23Q20 27 16 21Q14 18 15 14Z" fill="#0c4da2" /><path d="M15 14Q14 22 20 22Q25 23 29 20L30 15Q30 20 23 20Q17 20 18 16Z" fill="#d7eed6" /></svg></button>
      <button aria-label="Mail"><svg width="30" height="28" viewBox="0 0 30 28"><path d="M0 10L15 0L30 10V28H0Z" fill="#0b5cab" /><path d="M3 9H27L15 20Z" fill="#fff" /><path d="M0 10L18 23L30 28H0Z" fill="#2a9df0" /><path d="M30 10L12 21L0 28H30Z" fill="#38bdf5" /></svg></button>
      <button aria-label="File Explorer"><svg width="30" height="28" viewBox="0 0 30 28"><path d="M0 2Q0 0 2 0H10L13 4H28V12H0Z" fill="#e0a010" /><path d="M0 8H10L13 4H28Q30 4 30 6V26H0Z" fill="#ffcf48" /><path d="M5 28V21Q5 19 7 19H23Q25 19 25 21V28Z" fill="#1a72cc" /><path d="M10 23H20" stroke="#0b4a90" stroke-width="2" /></svg></button>
      <button class="run" aria-label="Notepad"><svg width="24" height="30" viewBox="0 0 24 30"><rect x="1" y="2" width="22" height="25" rx="1" fill="#4fc0e8" /><path d="M4 0V5M8 0V5M12 0V5M16 0V5M20 0V5" stroke="#155a80" stroke-width="1.500" /><path d="M5 10H19M5 15H19M5 20H13" stroke="#145f9a" stroke-width="1.800" /><path d="M1 29H23" stroke="#a04a10" stroke-width="2" /></svg></button>
      <button class="run" aria-label="Chrome, profile S">{@render chrome('S', 'teal')}</button>
      <button class="run" aria-label="Chrome, second profile">{@render chrome('S', 'dark')}</button>
      <button class="cur" aria-label="Power BI Desktop"><svg width="24" height="30" viewBox="0 0 24 30"><rect x="12" y="0" width="11" height="30" rx="1" fill="#c9830c" /><rect x="12" y="0" width="11" height="18" rx="1" fill="#dda514" /><rect x="6" y="8" width="11" height="22" rx="1" fill="#efc02c" /><rect x="1" y="15" width="10" height="15" rx="1" fill="#f8df78" /></svg></button>
    </div>
    <div class="tray">
      <button aria-label="Show hidden icons"><svg width="16" height="9" viewBox="0 0 16 9"><path d="M1 8L8 1L15 8" class="t" /></svg></button>
      <button aria-label="OneDrive"><svg width="22" height="18" viewBox="0 0 22 18"><path d="M5 14Q1 14 1 10Q1 7 5 7Q7 1 12 3Q16 4 16 8Q21 8 21 12Q20 15 17 15H5Z" fill="#999" stroke="#222" stroke-width="1.500" /><path d="M3 1L19 17" class="t" /></svg></button>
      <button aria-label="Updates"><svg width="21" height="20" viewBox="0 0 21 20"><path d="M2 8Q4 2 10 2Q15 2 18 6M18 1V6H13M3 19V13H8M3 13Q5 18 10 18" class="t" /><circle cx="15.500" cy="14.500" r="5" fill="#f00" /></svg></button>
      <button class="lang">ENG<br />IN</button>
      <button aria-label="Network"><svg width="20" height="20" viewBox="0 0 20 20"><path d="M9 19A9 9 0 1 1 19 10M1 7H18M1 13H9M10 1Q5 6 6 12Q7 17 9 19M10 1Q13 4 14 8" class="t" /><circle cx="14.500" cy="14.500" r="4.500" class="t" /><path d="M11.500 17.500L17.500 11.500" class="t" /></svg></button>
      <button aria-label="Volume"><svg width="20" height="16" viewBox="0 0 20 16"><path d="M1 5H4L9 1V15L4 11H1ZM12 5Q14 8 12 11M14 3Q18 8 14 13" class="t" /><path d="M16.500 1Q21 8 16.500 15" fill="none" stroke="#999" /></svg></button>
      <button aria-label="Battery"><svg width="21" height="14" viewBox="0 0 21 14"><rect x="1" y="1" width="16" height="12" rx="3" class="t" /><rect x="4" y="3" width="10" height="8" fill="#1a1a1a" /><path d="M19 5V9" stroke="#1a1a1a" stroke-width="2" /></svg></button>
      <button class="clock">17:12<br />27-07-2025</button>
      <button class="badge" aria-label="2 notifications">2</button>
    </div>
  </div>
</div>

<style>
  :global(body) { margin: 0; }
  .app, .app * { box-sizing: border-box; }
  .app { height: 100vh; display: flex; flex-direction: column; overflow: hidden; font-family: 'Open Sans', 'Noto Sans', sans-serif; font-size: 14px; line-height: 20px; color: #252423; background: #f3f2f1; }
  button { font: inherit; color: inherit; background: none; border: 0; padding: 0; margin: 0; display: flex; align-items: center; justify-content: center; white-space: nowrap; }
  input { font: inherit; color: inherit; background: none; border: 0; padding: 0; margin: 0; outline: 0; min-width: 0; }
  h2, h3, p, ul { margin: 0; padding: 0; font-size: 14px; font-weight: 400; list-style: none; }
  svg { overflow: visible; flex: none; }
  .ln { fill: none; stroke: #fff; stroke-width: 1.5; }
  .k1 { fill: none; stroke: #333; stroke-width: 1.2; }
  .k2 { fill: none; stroke: #252423; stroke-width: 1.5; }
  .g { fill: none; stroke: #605e5c; stroke-width: 1.5; }
  .t { fill: none; stroke: #1a1a1a; stroke-width: 1.5; }
  .lens { width: 20px; height: 20px; fill: none; stroke: #333; stroke-width: 1.3; }
  .lens.flip { width: 18px; height: 18px; transform: scaleX(-1); }
  .lens.thick { width: 19px; height: 19px; stroke: #1f1f1f; stroke-width: 2.2; }
  .chev { width: 8px; height: 6px; margin-left: 3px; fill: none; stroke: currentColor; stroke-width: 1.8; }
  .dbl { width: 16px; height: 16px; fill: none; stroke: #252423; stroke-width: 1.5; }

  .titlebar { height: 43px; flex: none; background: #3b3a38; color: #fff; display: grid; grid-template-columns: 813fr 500fr 607fr; align-items: center; }
  .tleft { display: flex; align-items: center; gap: 20px; padding-left: 20px; }
  .dim { opacity: 0.4; }
  .doc { gap: 12px; padding-top: 5px; margin-left: -10px; }
  .tsearch { height: 30px; background: #d5d5d2; border-radius: 3px; display: flex; align-items: center; gap: 15px; padding-left: 21px; }
  .tsearch input { flex: 1; font-size: 16px; }
  .tsearch input::placeholder { color: #1f5a4d; opacity: 1; }
  .tright { display: flex; justify-content: flex-end; align-items: center; }
  .signin { gap: 13px; margin-right: 19px; }
  .win { width: 55px; height: 43px; }

  .tabs { height: 43px; flex: none; background: #fafafa; display: flex; align-items: flex-start; padding: 0 7px 0 9px; font-size: 17px; }
  .tabs > button { height: 43px; padding: 0 19px; }
  .tabs > .file { margin-right: 7px; }
  .tabs span { padding: 2px 0 5px; line-height: 25px; border-bottom: 3px solid transparent; }
  .tabs .on { font-weight: 600; }
  .tabs .on span { border-color: #117865; }
  .tabs > .share { margin: 5px 0 0 auto; height: 30px; padding: 0 9px; gap: 8px; background: #117865; color: #fff; border-radius: 4px; font-size: 14px; }

  .ribbon { height: 114px; flex: none; background: #fafafa; border-bottom: 1px solid #d6d5d4; box-shadow: 0 2px 4px rgba(0, 0, 0, 0.14); display: flex; position: relative; z-index: 2; }
  .group { display: flex; flex-direction: column; margin: 2px 0 0; border-right: 1px solid #c8c6c4; }
  .items { display: flex; flex: 1; padding-top: 6px; }
  .group h3 { font-size: 12px; line-height: 16px; text-align: center; }
  .clipboard { width: 201px; }
  .rb { flex-direction: column; justify-content: flex-start; flex: none; }
  .rb svg:first-child { margin-bottom: 3px; }
  .rb span { display: flex; align-items: center; min-height: 20px; }
  .off, .stack { color: #c8c6c4; }
  .clipboard .rb { width: 40px; margin-left: 15px; }
  .stack { display: flex; flex-direction: column; gap: 8px; padding: 0 0 0 10px; margin-top: -2px; }
  .stack button { justify-content: flex-start; gap: 5px; height: 22px; color: #c8c6c4; }
  .collapse { margin: auto 6px 7px auto; }

  .body { flex: 1; display: flex; min-height: 0; }
  .rail { width: 51px; flex: none; border-right: 1px solid #dcdbda; }
  .rail button { width: 50px; height: 50px; border-left: 3px solid transparent; padding: 0 3px 2px 0; }
  .rail .on { border-color: #117865; background: #f8f7f6; }
  .dax { font-size: 8px; font-weight: 700; fill: #605e5c; stroke: #f3f2f1; stroke-width: 2px; paint-order: stroke; }

  .center { flex: 1; display: flex; flex-direction: column; min-width: 0; }
  .info { height: 41px; flex: none; display: flex; align-items: center; padding: 2px 13px 0 17px; background: #f4f4f4; border-bottom: 1px solid #c8c8c8; }
  .info p { margin: 0 auto 0 10px; }
  .rec { height: 30px; padding: 0 10px; background: #fff; border-radius: 4px; }
  .x { margin-left: 18px; }
  .work { flex: 1; display: flex; min-height: 0; background: #fff; }
  .canvas { flex: 1; display: flex; flex-direction: column; min-width: 0; }
  .scroll { flex: 1; display: flex; justify-content: space-between; min-height: 0; overflow: hidden; padding-left: 11px; }
  .sheet { display: flex; overflow: hidden; padding-left: 2px; background: repeating-linear-gradient(#555 0 2px, #fff 2px 4px) left top / 2px 100% no-repeat; }
  .vbar { width: 11px; flex: none; margin: 21px 2px 20px 0; background: #c8c8c8; border-radius: 6px; }
  .hbar { height: 11px; width: 912px; flex: none; margin: 2px 0; background: #c8c8c8; border-radius: 6px; }
  .ct { font: 400 19px Roboto, sans-serif; fill: #252423; }
  .at { font: 500 16px Roboto, sans-serif; fill: #252423; }
  .lb { font-size: 13px; fill: #605e5c; }
  .ax { font-size: 13px; fill: #605e5c; }
  .lg { font-size: 14px; fill: #605e5c; }
  .b { font-weight: 700; }
  .lead { fill: none; stroke: #a6a6a6; stroke-width: 1; }
  .grid { stroke: #c8c6c4; stroke-width: 1; stroke-dasharray: 1 5; }

  .filters { width: 251px; flex: none; border-left: 1px solid #a6a6a6; }
  .fs { padding: 16px 15px 5px 10px; border-bottom: 1px solid #a6a6a6; }
  .fs label { height: 38px; border: 1px solid #8a8886; border-radius: 2px; display: flex; align-items: center; gap: 16px; padding-left: 13px; }
  .fs input { width: 120px; }
  .fs input::placeholder { color: #252423; opacity: 1; }
  .fh { display: flex; justify-content: space-between; padding: 21px 16px 0 10px; }
  .fh button { font-size: 16px; }
  .drop { margin: 11px 10px 12px; height: 58px; border: 1px solid #c8c6c4; border-radius: 3px; display: flex; align-items: center; justify-content: center; }

  .pages { height: 44px; flex: none; display: flex; background: #f3f2f1; }
  .view { width: 30px; margin: 0 0 6px 13px; border-bottom: 3px solid transparent; }
  .view + .view { margin-left: 25px; }
  .view.on { border-color: #117865; }
  .arr { width: 27px; }
  .view + .arr { margin-left: 7px; }
  .pg { width: 94px; margin-left: 1px; background: #fff; border-bottom: 5px solid #117865; border-left: 1px solid #8a8886; padding-top: 5px; }
  .add { width: 49px; background: #117865; }

  .viz { width: 226px; flex: none; border-left: 1px solid #dcdbda; display: flex; flex-direction: column; }
  .ph { display: flex; justify-content: space-between; align-items: center; height: 50px; padding: 0 10px 0 10px; }
  h2 { font-size: 17px; font-weight: 600; }
  .bv { font-weight: 600; padding: 0 10px; margin-top: -2px; }
  .modes { display: flex; gap: 42px; padding: 4px 10px 0; }
  .modes button { width: 40px; height: 40px; border-radius: 3px; }
  .modes .on { background: #d0cecc; }
  .notch { margin-top: 5px; }
  .gallery { display: grid; grid-template-columns: repeat(6, 23px); grid-auto-rows: 23px; gap: 12px; padding: 14px 14px 0; }
  .dots { font-size: 20px; line-height: 10px; padding-bottom: 16px; }
  .wells { border-top: 1px solid #dcdbda; margin-top: 11px; padding: 11px 7px 0 5px; }
  .wells h3 { padding-left: 10px; }
  .well { background: #fff; border: 1px dashed #c8c6c4; border-radius: 3px; height: 35px; display: flex; align-items: center; padding-left: 13px; white-space: nowrap; }
  .v { margin: 6px 0 14px; }
  .d { height: 33px; padding-left: 10px; margin-top: 6px; }
  .dt { font-weight: 600; color: #484644; }
  .row { display: flex; align-items: center; height: 34px; padding: 0 20px 0 10px; position: relative; }
  .dt + .row { margin-top: 4px; }
  .row input { position: absolute; opacity: 0; right: 20px; }
  .tg { margin-left: auto; width: 40px; height: 20px; border: 1px solid #605e5c; border-radius: 10px; background: #fff; color: #605e5c; font-size: 11px; display: flex; align-items: center; justify-content: space-between; padding: 0 5px; }
  .tg i { width: 10px; height: 10px; border-radius: 50%; background: #605e5c; }
  .tg.on { background: #117865; border-color: #117865; color: #fff; }
  .tg.on i { background: #fff; }

  .data { width: 226px; flex: none; border-left: 1px solid #dcdbda; }
  .ds { display: flex; align-items: center; gap: 9px; height: 30px; margin: 7px 5px 0; padding-left: 15px; background: #fff; border: 1px solid #d1d1d1; border-bottom-color: #605e5c; border-radius: 4px; font-size: 15px; }
  .ds input { flex: 1; }
  .ds input::placeholder { color: #707070; opacity: 1; }
  .tbl { gap: 5px; height: 30px; margin: 12px 0 0 16px; }
  li { display: flex; align-items: center; height: 30px; padding-left: 38px; }
  .ex { width: 17px; display: flex; }
  li label { display: flex; align-items: center; }
  li input { appearance: none; width: 15px; height: 15px; border: 1px solid #605e5c; border-radius: 2px; }
  .ic { width: 32px; padding-left: 10px; display: flex; }

  .status { height: 29px; flex: none; display: flex; justify-content: space-between; align-items: center; padding: 4px 7px 0 5px; border-top: 1px solid #dcdbda; color: #484644; }
  .zoom { display: flex; align-items: center; gap: 6px; }
  .zoom button { font-size: 18px; }
  .zoom input { appearance: none; width: 126px; height: 1px; background: #605e5c; }
  .zoom input::-webkit-slider-thumb { appearance: none; width: 4px; height: 13px; background: #605e5c; }
  .pct { margin: 0 18px 0 9px; }
  .fit { margin-right: 15px; }
  .zoom a { color: inherit; text-decoration: none; }

  .taskbar { height: 61px; flex: none; border-top: 1px solid #000; display: grid; grid-template-columns: 1fr auto 1fr; align-items: center; color: #1a1a1a; background: linear-gradient(90deg, #cdeed6 0%, #c8ecdc 6%, #d0f2de 18%, #d3efcf 21.5%, #eedfc9 24%, #efdcd0 27%, #e3dfcb 29.500%, #cdefda 32%, #cdf0dc 40%, #e0e5cc 43%, #cfe3cc 48%, #d4ddd0 50%, #d0e8c8 55%, #ecdfc0 58%, #efdcc5 60%, #cfeed8 63%, #cdf2ce 69%, #cdf0c8 72.500%, #dadfd0 78.500%, #dcd9d2 85%, #d3ddd6 100%); }
  .widgets { justify-self: start; margin-left: 21px; }
  .apps { display: flex; align-items: center; }
  .apps button { width: 55px; height: 48px; position: relative; }
  .wsearch { width: 273px; height: 40px; margin: 0 3px 0 5px; border: 1px solid rgba(0, 0, 0, 0.1); border-radius: 20px; background: rgba(255, 255, 255, 0.68); display: flex; align-items: center; gap: 12px; padding-left: 13px; font-size: 16px; }
  .wsearch input { flex: 1; }
  .wsearch input::placeholder { color: #5c5c5c; opacity: 1; }
  .run::after, .cur::after { content: ''; position: absolute; bottom: 1px; width: 7px; height: 4px; border-radius: 2px; background: #74806f; }
  .cur::after { width: 20px; background: #0f78d4; }
  .apps .cur { width: 48px; margin: 0 4px 0 3px; background: rgba(255, 255, 255, 0.55); border-radius: 5px; }
  .teal { fill: #0c93a8; }
  .dark { fill: #0a4a40; }
  .initial { font-size: 11px; fill: #fff; }
  .tray { display: flex; align-items: center; justify-content: flex-end; gap: 10px; padding-right: 24px; }
  .lang { margin: 0 13px 0 6px; }
  .clock { text-align: right; margin-left: 12px; }
  .badge { width: 20px; height: 20px; border-radius: 50%; background: #0078d4; color: #fff; font-size: 12px; }
</style>
